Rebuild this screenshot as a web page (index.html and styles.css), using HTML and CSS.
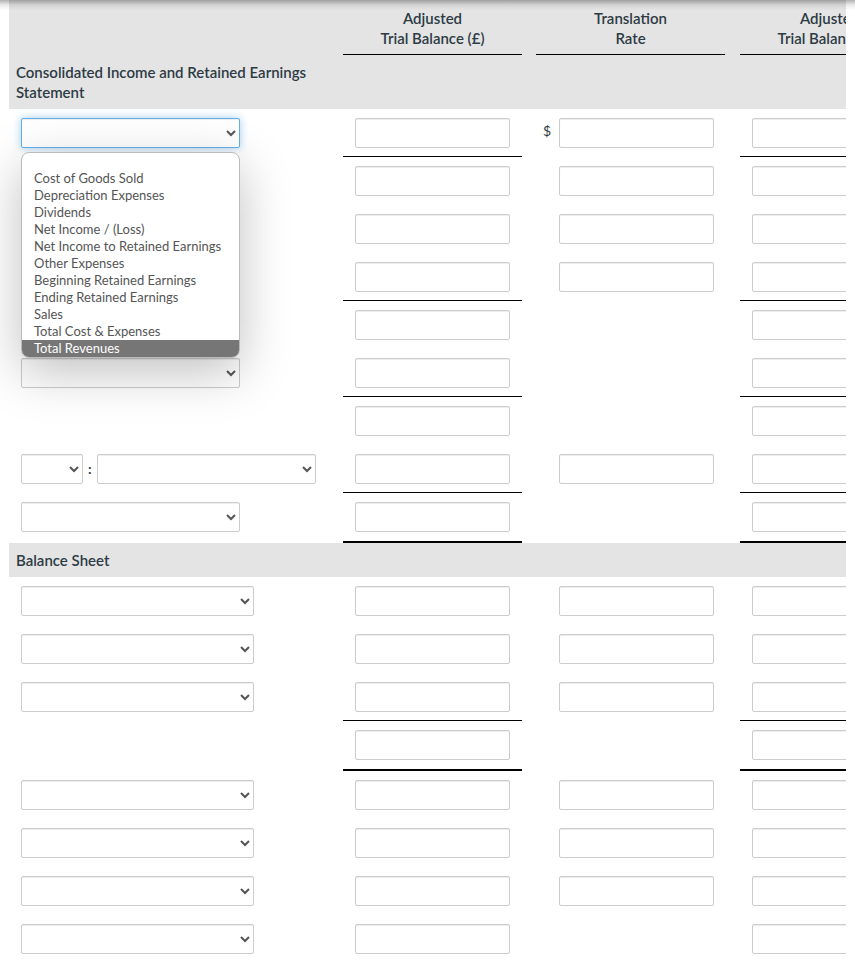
FILE: index.html
```html
<!DOCTYPE html>
<html lang="en">
<head>
    <meta charset="UTF-8">
    <meta name="viewport" content="width=device-width, initial-scale=1.0">
    <title>Trial Balance Translation</title>
    <link rel="stylesheet" href="styles.css">
</head>
<body>
    <div class="top-shadow"></div>
    <main class="page">
        <div class="table-wrap">
            <table class="worksheet">
                <colgroup>
                    <col class="col-account">
                    <col class="col-amount">
                    <col class="col-gap">
                    <col class="col-rate">
                    <col class="col-gap-wide">
                    <col class="col-amount">
                </colgroup>
                <thead>
                    <tr class="heading">
                        <td></td>
                        <th class="line" scope="col">Adjusted<br>Trial Balance (£)</th>
                        <td></td>
                        <th class="line" scope="col">Translation<br>Rate</th>
                        <td></td>
                        <th class="line" scope="col">Adjusted<br>Trial Balance ($)</th>
                    </tr>
                </thead>
                <tbody>
                    <tr class="section">
                        <th scope="rowgroup">Consolidated Income and Retained Earnings Statement</th>
                        <td colspan="5"></td>
                    </tr>
                    <tr>
                        <td class="account"><select class="focused" aria-label="Income account 1"><option></option></select></td>
                        <td class="amount line"><input type="text" aria-label="Pounds, row 1"></td>
                        <td></td>
                        <td class="rate"><label for="rate1">$</label><input type="text" id="rate1"></td>
                        <td></td>
                        <td class="amount line"><input type="text" aria-label="Dollars, row 1"></td>
                    </tr>
                    <tr>
                        <td class="account"><select aria-label="Income account 2"><option></option></select></td>
                        <td class="amount"><input type="text" aria-label="Pounds, row 2"></td>
                        <td></td>
                        <td class="rate"><input type="text" aria-label="Rate, row 2"></td>
                        <td></td>
                        <td class="amount"><input type="text" aria-label="Dollars, row 2"></td>
                    </tr>
                    <tr>
                        <td class="account"><select aria-label="Income account 3"><option></option></select></td>
                        <td class="amount"><input type="text" aria-label="Pounds, row 3"></td>
                        <td></td>
                        <td class="rate"><input type="text" aria-label="Rate, row 3"></td>
                        <td></td>
                        <td class="amount"><input type="text" aria-label="Dollars, row 3"></td>
                    </tr>
                    <tr>
                        <td class="account"><select aria-label="Income account 4"><option></option></select></td>
                        <td class="amount line"><input type="text" aria-label="Pounds, row 4"></td>
                        <td></td>
                        <td class="rate"><input type="text" aria-label="Rate, row 4"></td>
                        <td></td>
                        <td class="amount line"><input type="text" aria-label="Dollars, row 4"></td>
                    </tr>
                    <tr>
                        <td class="account"><select aria-label="Income account 5"><option></option></select></td>
                        <td class="amount"><input type="text" aria-label="Pounds, row 5"></td>
                        <td></td>
                        <td></td>
                        <td></td>
                        <td class="amount"><input type="text" aria-label="Dollars, row 5"></td>
                    </tr>
                    <tr>
                        <td class="account"><select aria-label="Income account 6"><option></option></select></td>
                        <td class="amount line"><input type="text" aria-label="Pounds, row 6"></td>
                        <td></td>
                        <td></td>
                        <td></td>
                        <td class="amount line"><input type="text" aria-label="Dollars, row 6"></td>
                    </tr>
                    <tr>
                        <td></td>
                        <td class="amount"><input type="text" aria-label="Pounds, row 7"></td>
                        <td></td>
                        <td></td>
                        <td></td>
                        <td class="amount"><input type="text" aria-label="Dollars, row 7"></td>
                    </tr>
                    <tr>
                        <td class="account">
                            <div class="pair">
                                <select class="short" aria-label="Add or less"><option></option></select>
                                <b>:</b>
                                <select aria-label="Income account 8"><option></option></select>
                            </div>
                        </td>
                        <td class="amount line"><input type="text" aria-label="Pounds, row 8"></td>
                        <td></td>
                        <td class="rate"><input type="text" aria-label="Rate, row 8"></td>
                        <td></td>
                        <td class="amount line"><input type="text" aria-label="Dollars, row 8"></td>
                    </tr>
                    <tr class="total">
                        <td class="account"><select aria-label="Income account 9"><option></option></select></td>
                        <td class="amount line"><input type="text" aria-label="Pounds, row 9"></td>
                        <td></td>
                        <td></td>
                        <td></td>
                        <td class="amount line"><input type="text" aria-label="Dollars, row 9"></td>
                    </tr>
                </tbody>
                <tbody class="balance">
                    <tr class="section">
                        <th scope="rowgroup">Balance Sheet</th>
                        <td colspan="5"></td>
                    </tr>
                    <tr>
                        <td class="account"><select aria-label="Asset 1"><option></option></select></td>
                        <td class="amount"><input type="text" aria-label="Pounds, asset 1"></td>
                        <td></td>
                        <td class="rate"><input type="text" aria-label="Rate, asset 1"></td>
                        <td></td>
                        <td class="amount"><input type="text" aria-label="Dollars, asset 1"></td>
                    </tr>
                    <tr>
                        <td class="account"><select aria-label="Asset 2"><option></option></select></td>
                        <td class="amount"><input type="text" aria-label="Pounds, asset 2"></td>
                        <td></td>
                        <td class="rate"><input type="text" aria-label="Rate, asset 2"></td>
                        <td></td>
                        <td class="amount"><input type="text" aria-label="Dollars, asset 2"></td>
                    </tr>
                    <tr>
                        <td class="account"><select aria-label="Asset 3"><option></option></select></td>
                        <td class="amount line"><input type="text" aria-label="Pounds, asset 3"></td>
                        <td></td>
                        <td class="rate"><input type="text" aria-label="Rate, asset 3"></td>
                        <td></td>
                        <td class="amount line"><input type="text" aria-label="Dollars, asset 3"></td>
                    </tr>
                    <tr class="total">
                        <td></td>
                        <td class="amount line"><input type="text" aria-label="Pounds, total assets"></td>
                        <td></td>
                        <td></td>
                        <td></td>
                        <td class="amount line"><input type="text" aria-label="Dollars, total assets"></td>
                    </tr>
                    <tr>
                        <td class="account"><select aria-label="Liability or equity 1"><option></option></select></td>
                        <td class="amount"><input type="text" aria-label="Pounds, liability or equity 1"></td>
                        <td></td>
                        <td class="rate"><input type="text" aria-label="Rate, liability or equity 1"></td>
                        <td></td>
                        <td class="amount"><input type="text" aria-label="Dollars, liability or equity 1"></td>
                    </tr>
                    <tr>
                        <td class="account"><select aria-label="Liability or equity 2"><option></option></select></td>
                        <td class="amount"><input type="text" aria-label="Pounds, liability or equity 2"></td>
                        <td></td>
                        <td class="rate"><input type="text" aria-label="Rate, liability or equity 2"></td>
                        <td></td>
                        <td class="amount"><input type="text" aria-label="Dollars, liability or equity 2"></td>
                    </tr>
                    <tr>
                        <td class="account"><select aria-label="Liability or equity 3"><option></option></select></td>
                        <td class="amount"><input type="text" aria-label="Pounds, liability or equity 3"></td>
                        <td></td>
                        <td class="rate"><input type="text" aria-label="Rate, liability or equity 3"></td>
                        <td></td>
                        <td class="amount"><input type="text" aria-label="Dollars, liability or equity 3"></td>
                    </tr>
                    <tr>
                        <td class="account"><select aria-label="Liability or equity 4"><option></option></select></td>
                        <td class="amount"><input type="text" aria-label="Pounds, liability or equity 4"></td>
                        <td></td>
                        <td></td>
                        <td></td>
                        <td class="amount"><input type="text" aria-label="Dollars, liability or equity 4"></td>
                    </tr>
                </tbody>
            </table>
        </div>

        <!-- open list of the first account select -->
        <ul class="options" role="listbox" aria-label="Accounts">
            <li role="option"></li>
            <li role="option">Cost of Goods Sold</li>
            <li role="option">Depreciation Expenses</li>
            <li role="option">Dividends</li>
            <li role="option">Net Income / (Loss)</li>
            <li role="option">Net Income to Retained Earnings</li>
            <li role="option">Other Expenses</li>
            <li role="option">Beginning Retained Earnings</li>
            <li role="option">Ending Retained Earnings</li>
            <li role="option">Sales</li>
            <li role="option">Total Cost &amp; Expenses</li>
            <li role="option" class="active" aria-selected="true">Total Revenues</li>
        </ul>
    </main>
</body>
</html>
```
FILE: styles.css
```css
* { box-sizing: border-box; }

body {
    margin: 0;
    background: #fff;
    color: #2d3b45;
    font-family: Lato, sans-serif;
    font-size: 14px;
    line-height: 20px;
}

.top-shadow {
    position: absolute;
    top: 0;
    left: 0;
    right: 0;
    height: 10px;
    background: linear-gradient(rgba(0, 0, 0, 0.3), rgba(0, 0, 0, 0.08) 50%, rgba(0, 0, 0, 0));
    z-index: 2;
}

.page {
    position: relative;
    padding: 0 9px;
}

.table-wrap {
    overflow: hidden;
}

.worksheet {
    width: 910px;
    table-layout: fixed;
    border-collapse: separate;
    border-spacing: 0;
}

.col-account { width: 334px; }
.col-amount { width: 179px; }
.col-gap { width: 14px; }
.col-rate { width: 189px; }
.col-gap-wide { width: 15px; }

.worksheet td {
    height: 48px;
    padding: 9px 0 0;
    vertical-align: top;
}

.worksheet .line {
    border-bottom: 1px solid #000;
}

.worksheet .total td {
    height: 50px;
}

.worksheet .total .line {
    border-bottom-width: 2px;
}

.heading, .section {
    background: #e4e4e4;
}

.worksheet th {
    font-size: 15px;
    font-weight: 600;
}

.heading th {
    padding: 8px 0 6px;
    text-align: center;
}

.section th {
    padding: 7px;
    text-align: left;
}

.worksheet .section td {
    height: auto;
    padding: 0;
}

.worksheet .account, .worksheet .amount {
    padding-left: 12px;
}

.worksheet .rate {
    padding-right: 11px;
    text-align: right;
}

.rate label {
    margin-right: 8px;
    line-height: 26px;
}

.pair {
    display: flex;
    align-items: center;
    gap: 5px;
}

input, select {
    height: 30px;
    margin: 0;
    border: 1px solid #ccc;
    border-radius: 2px;
    background-color: #fff;
    box-shadow: inset 0 1px 1px rgba(0, 0, 0, 0.075);
    color: #555;
    font: inherit;
    outline: none;
    vertical-align: top;
}

input {
    width: 155px;
    padding: 4px 8px;
}

select {
    width: 219px;
}

.balance select {
    width: 233px;
}

select.short {
    width: 62px;
}

select.focused, select:focus, input:focus {
    border-color: #66afe9;
    box-shadow: inset 0 1px 1px rgba(0, 0, 0, 0.075), 0 0 8px rgba(102, 175, 233, 0.6);
}

.options {
    position: absolute;
    top: 152px;
    left: 21px;
    width: 219px;
    margin: 0;
    padding: 0;
    overflow: hidden;
    list-style: none;
    background: #fff;
    border: 1px solid #bbb;
    border-radius: 8px;
    box-shadow: 0 14px 50px rgba(0, 0, 0, 0.25);
    color: #555;
    font-size: 13px;
    line-height: 17px;
}

.options li {
    height: 17px;
    padding: 0 12px;
    white-space: nowrap;
}

.options .active {
    background: #767676;
    color: #fff;
}
```
